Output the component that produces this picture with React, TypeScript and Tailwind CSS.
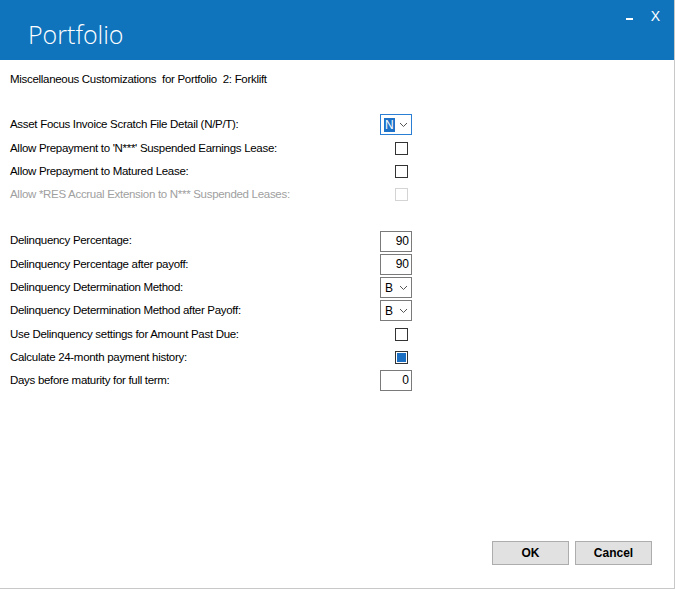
import React from "react";

type Row =
  | { label: string; kind: "select"; value: string; focus?: boolean }
  | { label: string; kind: "check"; checked?: boolean; disabled?: boolean }
  | { label: string; kind: "input"; value: string };

const top: Row[] = [
  { label: "Asset Focus Invoice Scratch File Detail (N/P/T):", kind: "select", value: "N", focus: true },
  { label: "Allow Prepayment to 'N***' Suspended Earnings Lease:", kind: "check" },
  { label: "Allow Prepayment to Matured Lease:", kind: "check" },
  { label: "Allow *RES Accrual Extension to N*** Suspended Leases:", kind: "check", disabled: true },
];

const bottom: Row[] = [
  { label: "Delinquency Percentage:", kind: "input", value: "90" },
  { label: "Delinquency Percentage after payoff:", kind: "input", value: "90" },
  { label: "Delinquency Determination Method:", kind: "select", value: "B" },
  { label: "Delinquency Determination Method after Payoff:", kind: "select", value: "B" },
  { label: "Use Delinquency settings for Amount Past Due:", kind: "check" },
  { label: "Calculate 24-month payment history:", kind: "check", checked: true },
  { label: "Days before maturity for full term:", kind: "input", value: "0" },
];

function Chevron() {
  return (
    <svg width="9" height="6" viewBox="0 0 9 6" className="ml-auto">
      <path d="M1 1l3.5 3.5L8 1" fill="none" stroke="#555" strokeWidth="1" />
    </svg>
  );
}

function Control({ row }: { row: Row }) {
  if (row.kind === "select")
    return (
      <div className={`flex items-center w-[32px] h-[21px] bg-white border px-[3px] ${row.focus ? "border-[#2a7fd4]" : "border-[#7a7a7a]"}`}>
        <span className={`text-[12px] leading-[14px] px-[1px] ${row.focus ? "bg-[#1e73c8] text-white" : "text-black"}`}>{row.value}</span>
        <Chevron />
      </div>
    );
  if (row.kind === "input")
    return (
      <div className="w-[32px] h-[21px] bg-white border border-[#7a7a7a] text-right pr-[2px] text-[12px] leading-[19px]">{row.value}</div>
    );
  return (
    <div className="w-[32px] flex justify-end pr-[4px]">
      <div className={`w-[13px] h-[13px] border flex items-center justify-center bg-white ${row.disabled ? "border-[#d4d4d4]" : "border-[#333]"}`}>
        {row.checked && <div className="w-[9px] h-[9px] bg-[#1b6fc2]" />}
      </div>
    </div>
  );
}

function Rows({ rows }: { rows: Row[] }) {
  return (
    <div className="w-[402px] flex flex-col">
      {rows.map((r) => (
        <div key={r.label} className="flex items-center justify-between h-[23.3px]">
          <span className={`text-[11.5px] tracking-[-0.3px] ${r.kind === "check" && r.disabled ? "text-[#a0a0a0]" : "text-black"}`}>{r.label}</span>
          <Control row={r} />
        </div>
      ))}
    </div>
  );
}

export default function App() {
  return (
    <div className="w-[675px] h-[589px] flex flex-col bg-white border-r border-b border-[#c8c8c8]" style={{ fontFamily: "'Liberation Sans', Arial, sans-serif" }}>
      <div className="h-[60px] bg-[#1074bd] flex items-start justify-between shrink-0">
        <div className="pl-[28px] pt-[19px] text-white text-[25px] font-light leading-[30px]" style={{ fontFamily: "'Open Sans', sans-serif", fontWeight: 300 }}>Portfolio</div>
        <div className="flex items-center gap-[18px] pr-[14px] pt-[9px] text-white">
          <div className="w-[7px] h-[2px] bg-white mt-[6px]" />
          <span className="text-[14px] leading-[14px]">X</span>
        </div>
      </div>
      <div className="pl-[10px] pt-[11px] text-[11.5px] tracking-[-0.3px]">Miscellaneous Customizations&nbsp; for Portfolio&nbsp; 2: Forklift</div>
      <div className="pl-[10px] pt-[25px]">
        <Rows rows={top} />
      </div>
      <div className="pl-[10px] pt-[23px]">
        <Rows rows={bottom} />
      </div>
      <div className="mt-auto flex justify-end gap-[6px] pr-[22px] pb-[23px]">
        <button className="w-[77px] h-[24px] bg-[#e1e1e1] border border-[#adadad] text-[12px] font-bold">OK</button>
        <button className="w-[77px] h-[24px] bg-[#e1e1e1] border border-[#adadad] text-[12px] font-bold">Cancel</button>
      </div>
    </div>
  );
}
